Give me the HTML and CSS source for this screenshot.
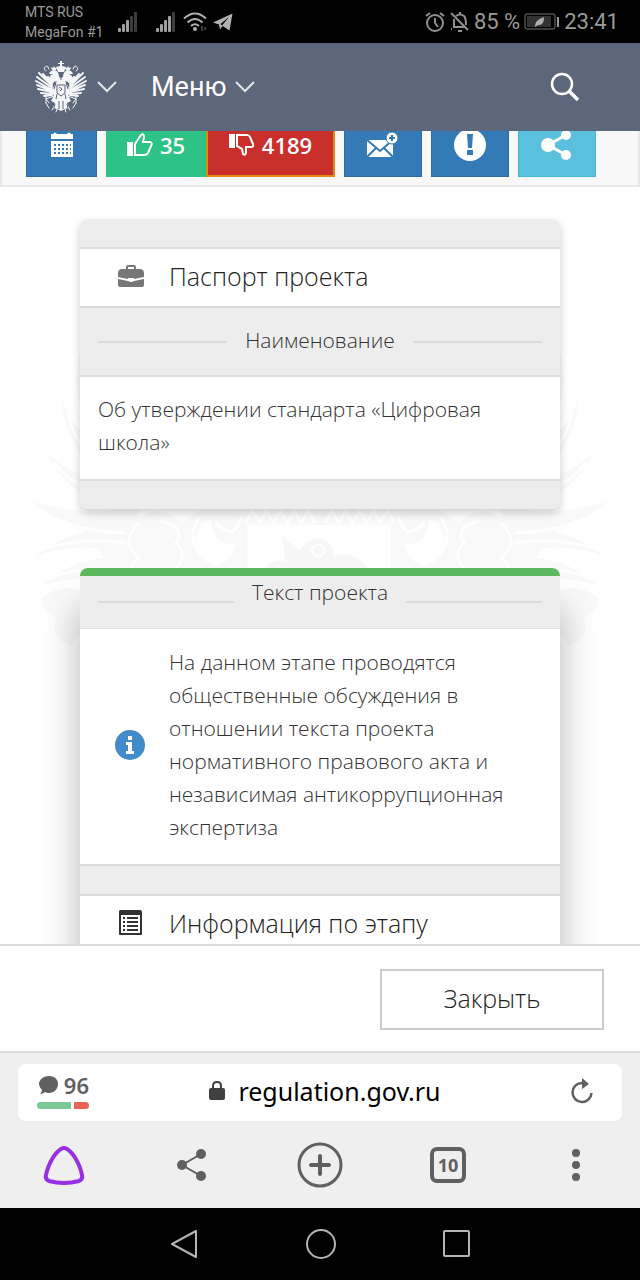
FILE: index.html
```html
<!DOCTYPE html>
<html lang="ru">
<head>
  <meta charset="UTF-8">
  <meta name="viewport" content="width=device-width, initial-scale=1.0">
  <title>Паспорт проекта</title>
  <link rel="stylesheet" href="styles.css">
</head>
<body>

  <!-- Строка состояния -->
  <div class="status">
    <div class="carriers">
      <div>MTS RUS</div>
      <div>MegaFon #1</div>
    </div>
    <svg class="signal" width="22" height="20" viewBox="0 0 22 20" fill="#a0a0a0">
      <rect x="1" y="16" width="3" height="4" rx="1"/>
      <rect x="5" y="12" width="3" height="8" rx="1"/>
      <rect x="9" y="8" width="3" height="12" rx="1"/>
      <rect x="13" y="4" width="3" height="16" rx="1" fill="#3c3c3c"/>
      <rect x="17" y="0" width="3" height="20" rx="1" fill="#3c3c3c"/>
    </svg>
    <svg width="22" height="20" viewBox="0 0 22 20" fill="#a0a0a0">
      <rect x="1" y="16" width="3" height="4" rx="1"/>
      <rect x="5" y="12" width="3" height="8" rx="1"/>
      <rect x="9" y="8" width="3" height="12" rx="1"/>
      <rect x="13" y="4" width="3" height="16" rx="1"/>
      <rect x="17" y="0" width="3" height="20" rx="1" fill="#3c3c3c"/>
    </svg>
    <svg class="wifi" width="24" height="20" viewBox="0 0 24 20" fill="none" stroke="#b0b0b0" stroke-width="2">
      <path d="M1 6.500Q12-3.500 23 6.500M4.500 10.500Q12 3.500 19.500 10.500M8 14Q12 10.500 16 14"/>
      <circle cx="12" cy="17" r="2" fill="#b0b0b0" stroke="none"/>
      <path d="M19 14v5M22 15v3" stroke="#777" stroke-width="1"/>
    </svg>
    <svg width="20" height="20" viewBox="0 0 20 20" fill="#b0b0b0">
      <path d="M19.500 1.500 16.500 18.500 9.500 14 7 17.500 6 12.500 0 10.500ZM16 5 7.500 12 9 13.500Z" fill-rule="evenodd"/>
    </svg>
    <div class="status-right">
      <svg width="22" height="22" viewBox="0 0 22 22" fill="none" stroke="#909090" stroke-width="2">
        <circle cx="11" cy="12" r="8"/>
        <path d="M11 7v5l3 4M2 5l4-3M20 5l-4-3"/>
      </svg>
      <svg width="20" height="22" viewBox="0 0 20 22" fill="none" stroke="#909090" stroke-width="2">
        <path d="M6 5Q10 2 14 5Q16 7 16 14M4 8V16H14M1 18h1M1 2 18 19M8 20h4M10 1v3"/>
      </svg>
      <span class="status-text">85 %</span>
      <svg width="36" height="18" viewBox="0 0 36 18">
        <rect x="1" y="1" width="30" height="15" rx="2" fill="none" stroke="#777"/>
        <rect x="3" y="3" width="24" height="11" fill="#333"/>
        <rect x="33" y="4" width="2" height="10" fill="#999"/>
        <path d="M11 13Q11 7 20 4Q20 13 14 12L11 14Z" fill="#b0b0b0"/>
      </svg>
      <span class="status-text">23:41</span>
    </div>
  </div>

  <!-- Шапка портала -->
  <header class="header">
    <button class="head-btn" aria-label="Порталы">
      <svg width="52" height="52" viewBox="0 0 52 52">
        <defs>
          <g id="eagleHalf">
            <path d="M22 20Q18 22 15 18Q14 14 18 13L14 13Q15 9 20 9Q24 11 24 16L26 17V50L22 48 18 47 20 42 16 40 19 34 15 32 18 27Z"/>
            <path d="M17 9 16 6 18 7 19 5 20 7 22 6 21 9Z"/>
            <g fill="none" stroke="#f4f6f8" stroke-width="2" stroke-linecap="round">
              <path d="M18 21 13 16M17 23 8 13M17 25 4 12M17 27 2 16M17 29 1 20M17 30 2 24M17 31 3 28M17 33 6 32M17 34 9 35"/>
              <path d="M19 35 11 38 14 42M11 33v9M11 42 14 47M20 44 17 49M23 45 21 51" stroke-width="1"/>
              <path d="M11 10Q8 9 10 6M14 8Q13 4 11 5" stroke-width="1"/>
            </g>
            <path d="M21 22 19 28M22 33 21 38M24 40v8M20 43l-1 4" stroke="#5d677b" fill="none"/>
          </g>
        </defs>
        <g fill="#f4f6f8">
          <use href="#eagleHalf"/>
          <use href="#eagleHalf" transform="translate(52 0) scale(-1 1)"/>
          <path d="M25 0h2v2h2v1h-2v2l4 1-2 5h-6l-2-5 4-1V3h-2V2h2Z"/>
        </g>
        <path d="M22 24h8v8l-4 3-4-3Z" fill="none" stroke="#5d677b"/>
        <path d="M24 26l3 2-2 2M26 14v5" fill="none" stroke="#5d677b"/>
      </svg>
      <svg width="20" height="12" viewBox="0 0 20 12" fill="none" stroke="#e4e7ec" stroke-width="2"><path d="M1 1 10 10 19 1"/></svg>
    </button>
    <button class="head-btn menu-btn">
      Меню
      <svg width="20" height="12" viewBox="0 0 20 12" fill="none" stroke="#e4e7ec" stroke-width="2"><path d="M1 1 10 10 19 1"/></svg>
    </button>
    <button class="head-btn search-btn" aria-label="Поиск">
      <svg width="30" height="30" viewBox="0 0 30 30" fill="none" stroke="#fff">
        <circle cx="12" cy="12" r="10" stroke-width="2.500"/>
        <path d="M19 19 28 28" stroke-width="3.500"/>
      </svg>
    </button>
  </header>

  <main class="page">
    <!-- Двуглавый орёл на фоне -->
    <svg class="watermark" viewBox="0 0 580 400" aria-hidden="true">
      <defs>
        <g id="wing">
          <path d="M50 10Q35 50 60 90L90 80Q50 60 50 10Z"/>
          <path d="M30 62Q35 115 75 140L90 110Q45 105 30 62Z"/>
          <path d="M16 116Q35 155 80 170L100 140Q45 145 16 116Z"/>
          <path d="M2 164Q35 195 90 200L110 170Q45 180 2 164Z"/>
          <path d="M3 219Q45 185 110 190V220Q50 200 3 219Z"/>
          <path d="M10 248Q45 215 110 220V250Q50 235 10 248Z"/>
          <path d="M75 175Q95 165 110 180Q130 165 150 185L180 165H290V250H70Q85 230 65 210Q80 195 75 175Z"/>
          <path d="M10 260Q30 245 55 255L60 300Q45 290 40 310Q15 300 25 280Q8 275 10 260Z"/>
        </g>
        <g id="plumes">
          <path d="M8 173Q45 195 95 195M10 212Q45 200 95 205M16 242Q45 228 95 233M22 124Q45 155 90 160M36 75Q45 115 80 130"/>
          <path d="M108 185Q88 205 108 220Q88 235 112 248M130 183Q155 190 145 205Q160 220 140 235M168 180Q155 200 170 218M185 185Q205 205 210 180"/>
          <path d="M215 185l7-12 7 12 7-12 7 12 7-12 7 12 7-12 7 12 7-12 7 12"/>
        </g>
      </defs>
      <g fill="#f9f9f9">
        <use href="#wing"/>
        <use href="#wing" transform="translate(580 0) scale(-1 1)"/>
      </g>
      <g fill="none" stroke="#fff" stroke-width="3">
        <use href="#plumes"/>
        <use href="#plumes" transform="translate(580 0) scale(-1 1)"/>
      </g>
      <g fill="#fff">
        <path d="M170 186Q155 220 185 228Q202 225 206 205Q184 212 180 182Z"/>
        <path d="M410 186Q425 220 395 228Q378 225 374 205Q396 212 400 182Z"/>
        <path d="M217 187H361V260H217Z"/>
      </g>
      <path d="M228 239Q240 219 255 224L252 198Q265 210 270 213Q278 198 292 202Q305 205 303 220Q325 209 345 239Z" fill="#f7f7f7"/>
      <circle cx="288" cy="213" r="6" fill="none" stroke="#fff" stroke-width="2"/>
    </svg>

    <div class="toolbar">
      <button class="tool calendar" aria-label="Календарь">
        <svg width="24" height="26" viewBox="0 0 24 26" fill="#fff">
          <path d="M3 2q2-3 4 0h10q2-3 4 0h2v5H1V2ZM1 9h22v16H1Z"/>
          <path d="M4 13h17M4 17h17M4 21h17" stroke="#337ab7" stroke-width="2" stroke-dasharray="2 2"/>
        </svg>
      </button>
      <div class="votes">
        <button class="tool like">
          <svg width="26" height="24" viewBox="0 0 26 24">
            <path d="M0 9h6v14H0Z" fill="#fff"/>
            <path d="M8 11 14 2Q17 0 17 4L16 9H23Q26 10 24 13L21 20Q20 22 17 22H8Z" fill="none" stroke="#fff" stroke-width="2"/>
          </svg>
          35
        </button>
        <button class="tool dislike">
          <svg width="26" height="24" viewBox="0 0 26 24">
            <path d="M0 1h6v14H0Z" fill="#fff"/>
            <path d="M8 2H18Q20 2 21 4L24 11Q25 14 22 14H17L17 20Q16 23 14 21L13 16 8 13Z" fill="none" stroke="#fff" stroke-width="2"/>
          </svg>
          4189
        </button>
      </div>
      <button class="tool" aria-label="Подписаться">
        <svg width="32" height="28" viewBox="0 0 32 28">
          <path d="M0 9h26v17H0Z" fill="#fff"/>
          <path d="M0 9 13 20 26 9M0 26 9 17M26 26 17 17" fill="none" stroke="#337ab7" stroke-width="2"/>
          <circle cx="25" cy="7" r="6" fill="#fff" stroke="#337ab7" stroke-width="1"/>
          <path d="M25 4v6M22 7h6" stroke="#337ab7" stroke-width="2"/>
        </svg>
      </button>
      <button class="tool" aria-label="Сообщить">
        <svg width="34" height="34" viewBox="0 0 34 34">
          <circle cx="17" cy="17" r="16" fill="#fff"/>
          <path d="M14 6h6l-1 14h-4ZM14 22h6v5h-6Z" fill="#337ab7"/>
        </svg>
      </button>
      <button class="tool share" aria-label="Поделиться">
        <svg width="32" height="30" viewBox="0 0 32 30" fill="#fff">
          <path d="M25 5 7 15 25 25" fill="none" stroke="#fff" stroke-width="3"/>
          <circle cx="7" cy="15" r="7"/><circle cx="25" cy="5" r="5"/><circle cx="25" cy="25" r="5"/>
        </svg>
      </button>
    </div>

    <div class="cards">
      <section class="card">
        <div class="strip"></div>
        <h2 class="row title">
          <svg width="26" height="24" viewBox="0 0 26 24" fill="#777">
            <path d="M8 5V3q0-2 2-2h6q2 0 2 2v2h5q3 1 3 4v4l-10 2v-1h-6v1L0 13V9q0-3 3-4ZM10 5h6V3h-6ZM0 15l10 2q3 2 6 0l10-2v6q0 2-2 2H2q-2 0-2-2Z" fill-rule="evenodd"/>
          </svg>
          Паспорт проекта
        </h2>
        <h3 class="divider"><span>Наименование</span></h3>
        <p class="row text">Об утверждении стандарта «Цифровая школа»</p>
        <div class="strip last"></div>
      </section>

      <section class="card stage">
        <h3 class="divider"><span>Текст проекта</span></h3>
        <div class="row info">
          <svg width="30" height="30" viewBox="0 0 30 30">
            <circle cx="15" cy="15" r="15" fill="#428bca"/>
            <path d="M13 6h4v4h-4ZM11 12h6v9h2v3h-8v-3h2v-6h-2Z" fill="#fff"/>
          </svg>
          <p>На данном этапе проводятся общественные обсуждения в отношении текста проекта нормативного правового акта и независимая антикоррупционная экспертиза</p>
        </div>
        <div class="strip middle"></div>
        <h2 class="row title">
          <svg width="26" height="26" viewBox="0 0 26 26">
            <path d="M2 0h20q2 0 2 2v22q0 1-1 1H2q-1 0-1-1V1Z" fill="#333"/>
            <path d="M3 5h19v18H3Z" fill="#fff"/>
            <path d="M9 8h11M9 12h11M9 16h11M9 20h11M5 8h2M5 12h2M5 16h2M5 20h2" stroke="#333" stroke-width="2"/>
          </svg>
          Информация по этапу
        </h2>
      </section>
    </div>
  </main>

  <div class="actions">
    <button class="close">Закрыть</button>
  </div>

  <!-- Панель браузера -->
  <footer class="browser">
    <div class="address">
      <button class="comments">
        <span>
          <svg width="20" height="20" viewBox="0 0 20 20" fill="#606060"><path d="M10 1C16 1 19 5 19 9C19 14 15 18 10 18Q7 18 6 17Q4 19 1 19Q3 17 3 15Q0 12 0 9C0 5 4 1 10 1Z"/></svg>
          96
        </span>
        <i class="rating"></i>
      </button>
      <a class="site" href="#">
        <svg width="16" height="20" viewBox="0 0 16 20">
          <path d="M4 8V5q0-4 4-4t4 4v3" fill="none" stroke="#404040" stroke-width="2"/>
          <rect y="7" width="16" height="12" rx="2" fill="#404040"/>
        </svg>
        regulation.gov.ru
      </a>
      <button class="reload" aria-label="Обновить">
        <svg width="22" height="26" viewBox="0 0 22 26">
          <path d="M11 5A9.500 9.500 0 1 0 20.500 15" fill="none" stroke="#606060" stroke-width="2.500"/>
          <path d="M11 0 18 6 11 11Z" fill="#606060"/>
        </svg>
      </button>
    </div>
    <nav class="tabs">
      <button aria-label="Алиса">
        <svg width="42" height="42" viewBox="0 0 42 42" fill="none" stroke="#962fe5" stroke-width="4"><path d="M21 4Q25 4 31 12Q37 21 39 31Q40 35 36 37Q29 39 21 39T6 37Q2 35 3 31Q5 21 11 12Q17 4 21 4Z"/></svg>
      </button>
      <button aria-label="Поделиться">
        <svg width="32" height="34" viewBox="0 0 32 34" fill="#606060">
          <path d="M25 6 6 17 25 28" fill="none" stroke="#606060" stroke-width="2"/>
          <circle cx="6" cy="17" r="5"/><circle cx="25" cy="6" r="5"/><circle cx="25" cy="28" r="5"/>
        </svg>
      </button>
      <button aria-label="Новая вкладка">
        <svg width="46" height="46" viewBox="0 0 46 46" fill="none" stroke="#606060" stroke-width="3">
          <circle cx="23" cy="23" r="21"/>
          <path d="M23 14v18M14 23h18" stroke-width="4" stroke-linecap="round"/>
        </svg>
      </button>
      <button><span class="tab-count">10</span></button>
      <button aria-label="Меню браузера">
        <svg width="10" height="34" viewBox="0 0 10 34" fill="#606060"><circle cx="5" cy="5" r="4"/><circle cx="5" cy="17" r="4"/><circle cx="5" cy="29" r="4"/></svg>
      </button>
    </nav>
  </footer>

  <nav class="system">
    <button aria-label="Назад">
      <svg width="30" height="32" viewBox="0 0 30 32" fill="none" stroke="#b4b4b4" stroke-width="2" stroke-linejoin="round"><path d="M27 3V29L3 16Z"/></svg>
    </button>
    <button aria-label="Домой">
      <svg width="30" height="30" viewBox="0 0 30 30" fill="none" stroke="#b4b4b4" stroke-width="2"><circle cx="15" cy="15" r="14"/></svg>
    </button>
    <button aria-label="Недавние">
      <svg width="28" height="28" viewBox="0 0 28 28" fill="none" stroke="#b4b4b4" stroke-width="2"><rect x="1" y="1" width="25" height="25" rx="1"/></svg>
    </button>
  </nav>

</body>
</html>
```
FILE: styles.css
```css
* { box-sizing: border-box; }
body {
  font-family: 'Open Sans', 'Noto Sans', sans-serif;
  font-weight: 300;
  background: #fff;
  color: #333;
  margin: 0;
  height: 100vh;
  display: flex;
  flex-direction: column;
}
h2, h3, p { margin: 0; font-weight: 300; }
svg { flex: none; display: block; }
button {
  font: inherit;
  color: inherit;
  background: none;
  border: none;
  padding: 0;
  cursor: pointer;
}

/* строка состояния */
.status {
  flex: none;
  display: flex;
  align-items: center;
  height: 43px;
  padding: 0 21px 0 25px;
  background: #000;
  color: #9a9a9a;
  font-family: Roboto, sans-serif;
  font-weight: 400;
}
.carriers { font-size: 14px; line-height: 20px; }
.signal { margin: 0 16px 0 14px; }
.wifi { margin: 0 6px; }
.status-right {
  display: flex;
  align-items: center;
  gap: 4px;
  margin-left: auto;
}
.status-text { font-size: 22px; }

/* шапка */
.header {
  flex: none;
  display: flex;
  align-items: center;
  gap: 34px;
  height: 88px;
  padding: 0 60px 0 35px;
  background: #5d677b;
  color: #fff;
}
.head-btn {
  display: flex;
  align-items: center;
  gap: 10px;
}
.menu-btn {
  gap: 8px;
  font-family: Roboto, sans-serif;
  font-size: 27px;
  font-weight: 400;
}
.search-btn { margin-left: auto; }

/* прокручиваемая часть */
.page {
  position: relative;
  flex: 1;
  min-height: 0;
  overflow: hidden;
}
.watermark {
  position: absolute;
  top: 208px;
  left: 5%;
  width: 90%;
}
.toolbar {
  display: flex;
  gap: 9px;
  margin-top: -18px;
  padding: 0 24px 8px;
  background: #f8f8f8;
  border: 2px solid #e7e7e7;
  border-top: none;
}
.tool {
  display: flex;
  align-items: center;
  justify-content: center;
  gap: 7px;
  width: 78px;
  height: 64px;
  background: #337ab7;
  border: 1px solid #2e6da4;
  color: #fff;
  font-size: 22px;
  font-weight: 600;
  line-height: 24px;
}
.calendar { width: 71px; }
.votes { display: flex; }
.like { width: 100px; background: #2dc286; border-color: #2dc286; }
.dislike { width: 129px; background: #c9302c; border: 2px solid #e08a10; }
.share { background: #5bc0de; border-color: #46b8da; }

.cards {
  position: relative;
  padding: 32px 80px 0;
}
.card {
  margin-bottom: 59px;
  background: #fff;
  border-radius: 8px;
  box-shadow: 0 4px 10px rgba(0,0,0,0.2);
}
.strip {
  height: 30px;
  background: #ededed;
  border-bottom: 2px solid #ddd;
  border-radius: 8px 8px 0 0;
}
.strip.last {
  border-top: 2px solid #ddd;
  border-bottom: none;
  border-radius: 0 0 8px 8px;
}
.strip.middle {
  height: 32px;
  border-top: 2px solid #ddd;
  border-radius: 0;
}
.row { padding: 16px 18px; }
.title {
  display: flex;
  align-items: center;
  gap: 25px;
  height: 57px;
  padding: 0 18px 4px 38px;
  color: #222;
  font-size: 25px;
}
.divider {
  display: flex;
  align-items: center;
  gap: 18px;
  height: 71px;
  padding: 0 18px;
  background: #ededed;
  border-top: 2px solid #ddd;
  border-bottom: 2px solid #ddd;
  font-size: 21px;
}
.divider span { padding-bottom: 4px; }
.divider::before,
.divider::after {
  content: "";
  flex: 1;
  height: 2px;
  background: #dcdcdc;
}
.text, .info {
  font-size: 21px;
  line-height: 33px;
}
.text { padding-bottom: 20px; }
.stage {
  border-top: 8px solid #5cb85c;
  box-shadow: 0 40px 36px rgba(0,0,0,0.3);
}
.stage .divider { height: 53px; border-top: none; border-bottom-width: 1px; }
.stage .divider span { padding-bottom: 20px; }
.info {
  display: flex;
  align-items: center;
  gap: 24px;
  padding: 17px 18px 20px 35px;
}

.actions {
  flex: none;
  position: relative;
  display: flex;
  justify-content: flex-end;
  padding: 23px 36px 21px;
  background: #fff;
  border-top: 2px solid #ddd;
}
.close {
  width: 224px;
  height: 61px;
  padding-bottom: 4px;
  border: 2px solid #ccc;
  color: #222;
  font-size: 25px;
}

/* браузер */
.browser {
  flex: none;
  padding: 11px 18px 0;
  background: #efefef;
  border-top: 2px solid #ddd;
  color: #606060;
  font-weight: 400;
}
.address {
  display: flex;
  align-items: center;
  justify-content: space-between;
  height: 57px;
  padding: 0 29px 4px 19px;
  background: #fff;
  border-radius: 8px;
}
.comments {
  width: 52px;
  font-family: 'Noto Sans', sans-serif;
  font-size: 22px;
  font-weight: 600;
  line-height: 26px;
}
.comments span {
  display: flex;
  align-items: center;
  justify-content: flex-end;
  gap: 5px;
}
.rating {
  display: block;
  height: 7px;
  margin-top: 4px;
  border-radius: 4px;
  background: linear-gradient(90deg, #7ac896 34px, #fff 34px, #fff 37px, #eb6158 37px);
}
.site {
  display: flex;
  align-items: center;
  gap: 13px;
  padding-right: 10px;
  color: #000;
  font-family: 'Noto Sans', sans-serif;
  font-size: 25px;
  text-decoration: none;
}
.tabs {
  display: grid;
  grid-template-columns: repeat(5, 1fr);
  margin: 0 -18px;
  height: 87px;
}
.tabs button {
  display: flex;
  align-items: center;
  justify-content: center;
}
.tab-count {
  width: 36px;
  height: 36px;
  border: 4px solid #606060;
  border-radius: 7px;
  font-size: 18px;
  font-weight: 700;
  line-height: 28px;
}

.system {
  flex: none;
  display: flex;
  align-items: center;
  justify-content: center;
  gap: 107px;
  height: 72px;
  background: #000;
}
```
